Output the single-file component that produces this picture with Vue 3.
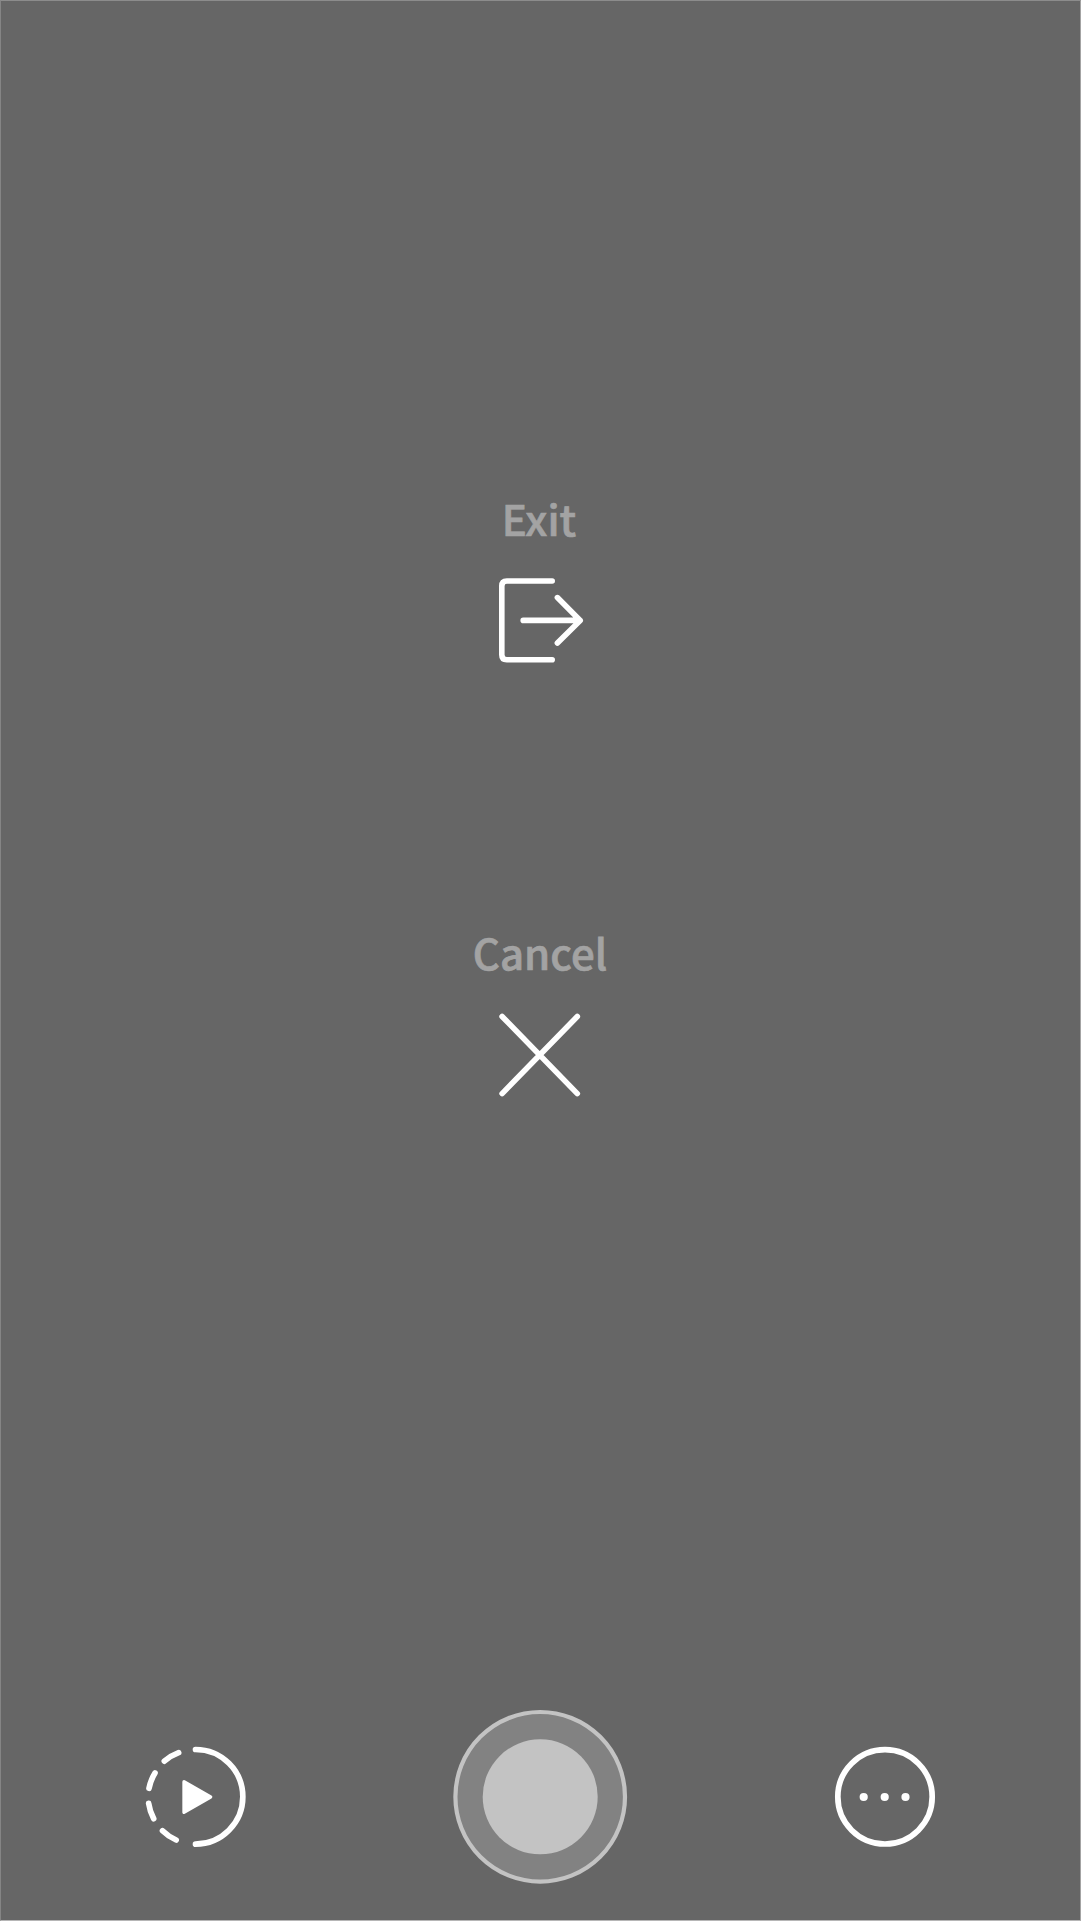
<script setup>
const actions = [
  { id: 'exit', label: 'Exit' },
  { id: 'cancel', label: 'Cancel' },
]
const dots = [28.7, 49.7, 70.5]
</script>

<template>
  <main class="screen">
    <section class="actions">
      <div v-for="action in actions" :key="action.id" class="action">
        <span class="label" :class="action.id">{{ action.label }}</span>
        <svg v-if="action.id === 'exit'" class="icon" viewBox="0 0 100 100">
          <path d="M61.2 11H15.8Q10.8 11 10.8 16V84.7Q10.8 89.7 15.8 89.7H61.2M32.2 50.4H89M66.4 27.6L89.2 50.4L66.4 73" />
        </svg>
        <svg v-else class="icon" viewBox="0 0 100 100">
          <path d="M11.1 12.5L86.3 89.6M86.3 12.5L11.1 89.6" />
        </svg>
      </div>
    </section>

    <footer class="controls">
      <svg class="side" viewBox="0 0 100 102">
        <g transform="scale(.33333) translate(-45 -48)">
          <path class="ring" d="M196.500 58.500A142 142 0 0 1 196.500 342.500M146 68A142 142 0 0 0 103 93.500M75 129A142 142 0 0 0 57 175M56 220A142 142 0 0 0 71 266M97.500 302A142 142 0 0 0 138.500 330" />
          <path class="play" d="M162 155L242 201L162 247Z" />
        </g>
      </svg>
      <svg class="shutter" viewBox="0 0 180 180">
        <circle class="rim" cx="90.200" cy="89.800" r="84.800" />
        <circle class="core" cx="90.200" cy="89.800" r="57.500" />
      </svg>
      <svg class="side" viewBox="0 0 100 102">
        <circle class="outline" cx="50" cy="50.800" r="47.200" />
        <circle v-for="x in dots" :key="x" class="dot" :cx="x" cy="51" r="4.100" />
      </svg>
    </footer>
  </main>
</template>

<style>
body { margin: 0; background: #666; }
</style>

<style scoped>
.screen {
  box-sizing: border-box;
  width: 1081px;
  height: 1921px;
  display: flex;
  flex-direction: column;
  justify-content: space-between;
  background: #666;
  border-style: solid;
  border-width: 1px;
  border-color: #8c8c8c #a3a3a3 #b6b6b6 #858585;
}
.actions {
  display: flex;
  flex-direction: column;
  align-items: center;
  gap: 252px;
  padding-top: 487px;
}
.action {
  display: flex;
  flex-direction: column;
  align-items: center;
  gap: 22px;
}
.label {
  font: 500 42px/60px "Noto Sans CJK SC", sans-serif;
  color: #a3a3a3;
  -webkit-text-stroke: 0.7px #a3a3a3;
}
.label.exit { margin-right: 3px; }
.label.cancel { margin-right: 1px; }
svg { display: block; overflow: visible; }
.icon {
  width: 100px;
  height: 100px;
  margin-left: 1px;
  fill: none;
  stroke: #fff;
  stroke-width: 5.6;
  stroke-linecap: round;
  stroke-linejoin: round;
}
.controls {
  display: flex;
  justify-content: space-between;
  align-items: center;
  padding: 0 145px 33px 144px;
}
.side { width: 100px; height: 102px; }
.shutter { width: 180px; height: 180px; }
.ring { fill: none; stroke: #fff; stroke-width: 17; stroke-linecap: round; }
.play { fill: #fff; stroke: #fff; stroke-width: 10; stroke-linejoin: round; }
.rim { fill: #828282; stroke: #c3c3c3; stroke-width: 4.200; }
.core { fill: #c3c3c3; }
.outline { fill: none; stroke: #fff; stroke-width: 5.700; }
.dot { fill: #fff; }
</style>
